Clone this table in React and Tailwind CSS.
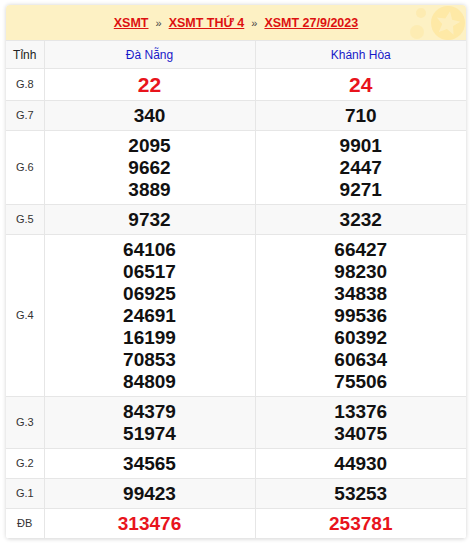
import React from "react";

const rows = [
  { label: "G.8", a: ["22"], b: ["24"], red: true, big: true },
  { label: "G.7", a: ["340"], b: ["710"], gray: true },
  { label: "G.6", a: ["2095", "9662", "3889"], b: ["9901", "2447", "9271"] },
  { label: "G.5", a: ["9732"], b: ["3232"], gray: true },
  {
    label: "G.4",
    a: ["64106", "06517", "06925", "24691", "16199", "70853", "84809"],
    b: ["66427", "98230", "34838", "99536", "60392", "60634", "75506"],
  },
  { label: "G.3", a: ["84379", "51974"], b: ["13376", "34075"], gray: true },
  { label: "G.2", a: ["34565"], b: ["44930"] },
  { label: "G.1", a: ["99423"], b: ["53253"], gray: true },
  { label: "ĐB", a: ["313476"], b: ["253781"], red: true },
];

function Cell({ nums, red, big, last }) {
  return (
    <td
      className={
        (last ? "border-r-0 " : "") +
        (big ? "py-[4.5px] " : "py-[3.5px] ") +
        "border border-[#e6e6e6] text-center align-middle"
      }
    >
      {nums.map((n) => (
        <div
          key={n}
          className={
            (red ? "text-[#e8141c] " : "text-[#111] ") +
            (big ? "text-[21px] " : "text-[19px] ") +
            "font-bold leading-[22px]"
          }
        >
          {n}
        </div>
      ))}
    </td>
  );
}

export default function App() {
  return (
    <div className="w-[472px] h-[544px] bg-white px-[6px] pt-[5px] font-['Liberation_Sans',Arial,sans-serif] overflow-hidden">
      <div className="rounded-[4px] bg-white shadow-[0_0_4px_rgba(0,0,0,0.18)] overflow-hidden">
        <div className="relative h-[35px] bg-[#fdf1c4] flex items-center justify-center pt-[1px] text-[12.5px] overflow-hidden">
          <svg className="absolute right-0 top-0" width="70" height="35" viewBox="0 0 70 35">
            <circle cx="52" cy="18" r="17" fill="#fde59c" opacity="0.75" />
            <polygon
              points="52,6 55.5,14 64,14.5 57.5,20 59.5,28.5 52,24 44.5,28.5 46.5,20 40,14.5 48.5,14"
              fill="#fdefc2"
              opacity="0.9"
              transform="rotate(10 52 18)"
            />
            <circle cx="25" cy="8" r="5" fill="#fde59c" opacity="0.45" />
            <circle cx="21" cy="27" r="7" fill="#fde59c" opacity="0.4" />
          </svg>
          <span className="relative text-[#dd1111] underline font-bold">XSMT</span>
          <span className="relative mx-[7px] text-[#444] text-[11px]">»</span>
          <span className="relative text-[#dd1111] underline font-bold">XSMT THỨ 4</span>
          <span className="relative mx-[7px] text-[#444] text-[11px]">»</span>
          <span className="relative text-[#dd1111] underline font-bold">XSMT 27/9/2023</span>
        </div>
        <table className="w-full border-collapse table-fixed">
          <colgroup>
            <col className="w-[38px]" />
            <col />
            <col />
          </colgroup>
          <thead>
            <tr className="bg-[#f8f8f8] h-[28px]">
              <th className="border border-[#e6e6e6] border-l-0 text-[12px] font-normal text-[#222]">Tỉnh</th>
              <th className="border border-[#e6e6e6] text-[12px] font-normal text-[#1818c8]">Đà Nẵng</th>
              <th className="border border-[#e6e6e6] border-r-0 text-[12px] font-normal text-[#1818c8]">Khánh Hòa</th>
            </tr>
          </thead>
          <tbody>
            {rows.map((r) => (
              <tr key={r.label} className={r.gray ? "bg-[#f8f8f8]" : "bg-white"}>
                <td className="border border-[#e6e6e6] border-l-0 text-center text-[11px] text-[#333]">{r.label}</td>
                <Cell nums={r.a} red={r.red} big={r.big} />
                <Cell nums={r.b} red={r.red} big={r.big} last />
              </tr>
            ))}
          </tbody>
        </table>
      </div>
    </div>
  );
}
